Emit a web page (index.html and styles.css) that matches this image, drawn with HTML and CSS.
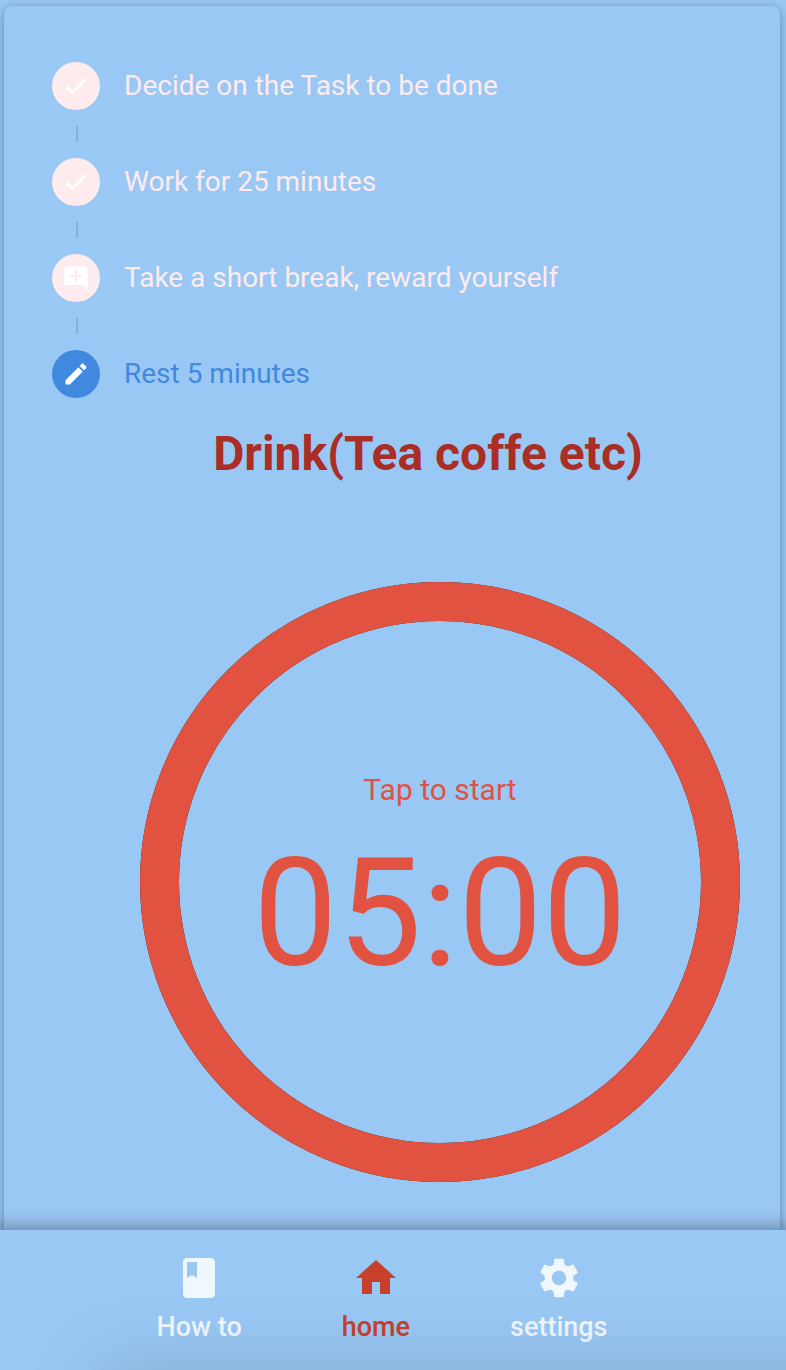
FILE: index.html
```html
<!DOCTYPE html>
<html lang="en">
<head>
<meta charset="utf-8">
<meta name="viewport" content="width=device-width, initial-scale=1">
<title>Pomodoro</title>
<link rel="stylesheet" href="styles.css">
</head>
<body class="screen">
<main class="card">
  <ol class="steps">
    <li class="step">
      <span class="step-dot"><svg class="step-icon step-check" viewBox="0 0 24 24" aria-hidden="true"><path d="M9 16.17L4.83 12l-1.42 1.41L9 19 21 7l-1.41-1.41z"/></svg></span>
      <span class="step-label">Decide on the Task to be done</span>
    </li>
    <li class="step">
      <span class="step-dot"><svg class="step-icon step-check" viewBox="0 0 24 24" aria-hidden="true"><path d="M9 16.17L4.83 12l-1.42 1.41L9 19 21 7l-1.41-1.41z"/></svg></span>
      <span class="step-label">Work for 25 minutes</span>
    </li>
    <li class="step">
      <span class="step-dot"><svg class="step-icon" viewBox="0 0 24 24" aria-hidden="true"><path d="M22 4c0-1.100-.9-2-2-2H4c-1.100 0-2 .9-2 2v12c0 1.100.9 2 2 2h14l4 4V4zm-5 7h-4v4h-2v-4H7V9h4V5h2v4h4v2z"/></svg></span>
      <span class="step-label">Take a short break, reward yourself</span>
    </li>
    <li class="step step-active">
      <span class="step-dot"><svg class="step-icon" viewBox="0 0 24 24" aria-hidden="true"><path d="M3 17.250V21h3.750L17.810 9.940l-3.750-3.750L3 17.250zM20.710 7.040c.39-.39.39-1.020 0-1.410l-2.340-2.340c-.39-.39-1.020-.39-1.410 0l-1.830 1.830 3.750 3.750 1.830-1.830z"/></svg></span>
      <span class="step-label">Rest 5 minutes</span>
    </li>
  </ol>
  <h1 class="activity">Drink(Tea coffe etc)</h1>
  <div class="timer-area">
    <button class="timer" type="button">
      <svg class="timer-ring" viewBox="0 0 1200 1200" aria-hidden="true">
        <circle class="ring-edge" cx="600" cy="600" r="561"/>
        <circle class="ring-fill" cx="600" cy="600" r="561"/>
      </svg>
      <span class="timer-text">
        <span class="timer-hint">Tap to start</span>
        <span class="timer-time">05:00</span>
      </span>
    </button>
  </div>
</main>
<nav class="tabs">
  <a class="tab" href="#how-to">
    <svg class="tab-icon" viewBox="0 0 24 24" aria-hidden="true"><path d="M18 2H6c-1.100 0-2 .9-2 2v16c0 1.100.9 2 2 2h12c1.100 0 2-.9 2-2V4c0-1.100-.9-2-2-2zM6 4h5v8l-2.500-1.500L6 12V4z"/></svg>
    <span>How to</span>
  </a>
  <a class="tab tab-current" href="#home" aria-current="page">
    <svg class="tab-icon" viewBox="0 0 24 24" aria-hidden="true"><path d="M10 20v-6h4v6h5v-8h3L12 3 2 12h3v8z"/></svg>
    <span>home</span>
  </a>
  <a class="tab" href="#settings">
    <svg class="tab-icon" viewBox="0 0 24 24" aria-hidden="true"><path d="M19.140 12.940c.04-.3.06-.61.06-.94 0-.32-.02-.64-.07-.94l2.030-1.580c.18-.14.23-.41.12-.61l-1.920-3.320c-.12-.22-.37-.29-.59-.22l-2.390.96c-.5-.38-1.030-.7-1.620-.94l-.36-2.540c-.04-.24-.24-.41-.48-.41h-3.840c-.24 0-.43.17-.47.41l-.36 2.540c-.59.24-1.130.57-1.620.94l-2.390-.96c-.22-.08-.47 0-.59.22L2.740 8.870c-.12.21-.08.47.12.61l2.030 1.580c-.05.3-.09.63-.09.94s.02.64.07.94l-2.030 1.580c-.18.14-.23.41-.12.61l1.920 3.320c.12.22.37.29.59.22l2.390-.96c.5.38 1.030.7 1.620.94l.36 2.540c.05.24.24.41.48.41h3.840c.24 0 .44-.17.47-.41l.36-2.540c.59-.24 1.130-.56 1.620-.94l2.390.96c.22.08.47 0 .59-.22l1.920-3.320c.12-.22.07-.47-.12-.61l-2.010-1.580zM12 15.600c-1.980 0-3.600-1.620-3.600-3.600s1.620-3.600 3.600-3.600 3.600 1.620 3.600 3.600-1.620 3.600-3.600 3.600z"/></svg>
    <span>settings</span>
  </a>
</nav>
</body>
</html>
```

FILE: styles.css
```css
* {
  box-sizing: border-box;
}

.screen {
  display: flex;
  flex-direction: column;
  min-height: 100vh;
  margin: 0;
  background: #9ac8f5;
  color: #feebee;
  font-family: Roboto, "Liberation Sans", sans-serif;
}

.card {
  flex: 1;
  margin: 6px 6px 0 4px;
  padding: 56px 40px 48px 48px;
  border-radius: 8px 8px 0 0;
  background: #9ac8f5;
  box-shadow: 0 2px 10px rgba(0, 0, 0, 0.35);
}

.steps {
  display: flex;
  flex-direction: column;
  gap: 48px;
  margin: 0;
  padding: 0;
  list-style: none;
}

.step {
  position: relative;
  display: flex;
  align-items: center;
  gap: 24px;
  font-size: 28px;
  line-height: 48px;
}

.step + .step::before {
  content: "";
  position: absolute;
  top: -32px;
  left: 24px;
  width: 2px;
  height: 16px;
  background: #86b1d9;
}

.step-dot {
  display: grid;
  flex: none;
  place-items: center;
  width: 48px;
  height: 48px;
  border-radius: 50%;
  background: #feebee;
}

.step-icon {
  width: 28px;
  height: 28px;
  fill: #ffffff;
}

.step-check {
  stroke: #ffffff;
  stroke-width: 0.5;
}

.step-active {
  color: #4089df;
}

.step-active .step-dot {
  background: #4089df;
}

.activity {
  margin: 24px 0 0 72px;
  padding-right: 8px;
  color: #aa2e25;
  font-size: 48px;
  font-weight: 700;
  line-height: 64px;
  text-align: center;
}

.timer-area {
  display: flex;
  justify-content: center;
  margin-top: 96px;
  padding-left: 88px;
}

.timer {
  display: grid;
  flex: 1;
  place-items: center;
  max-width: 600px;
  padding: 0;
  border: 0;
  border-radius: 50%;
  background: transparent;
  color: #e15241;
  font-family: inherit;
  cursor: pointer;
}

.timer-ring,
.timer-text {
  grid-area: 1 / 1;
}

.timer-ring {
  display: block;
  width: 100%;
  fill: none;
  stroke-width: 78px;
}

.ring-edge {
  stroke: #222222;
}

.ring-fill {
  stroke: #e15241;
}

.timer-text {
  display: flex;
  flex-direction: column;
  align-items: center;
  gap: 4px;
  padding-top: 20px;
}

.timer-hint {
  font-size: 30px;
  line-height: 40px;
}

.timer-time {
  font-size: 150px;
  line-height: 200px;
}

.tabs {
  position: relative;
  display: flex;
  justify-content: center;
  gap: 100px;
  height: 140px;
  padding: 24px 22px 0 0;
  overflow: hidden;
  background: #9ac8f5;
  box-shadow: 0 10px 20px 10px rgba(0, 0, 0, 0.45);
}

.tabs::after {
  content: "";
  position: absolute;
  top: 100%;
  right: -80px;
  left: 100px;
  height: 80px;
  box-shadow: 0 0 80px rgba(0, 0, 0, 0.16);
  pointer-events: none;
}

.tab {
  display: flex;
  flex-direction: column;
  align-items: center;
  gap: 8px;
  color: #f0f7fe;
  font-size: 27px;
  font-weight: 500;
  line-height: 34px;
  text-decoration: none;
}

.tab-current {
  color: #c8402a;
}

.tab-icon {
  width: 48px;
  height: 48px;
  fill: currentColor;
}
```
